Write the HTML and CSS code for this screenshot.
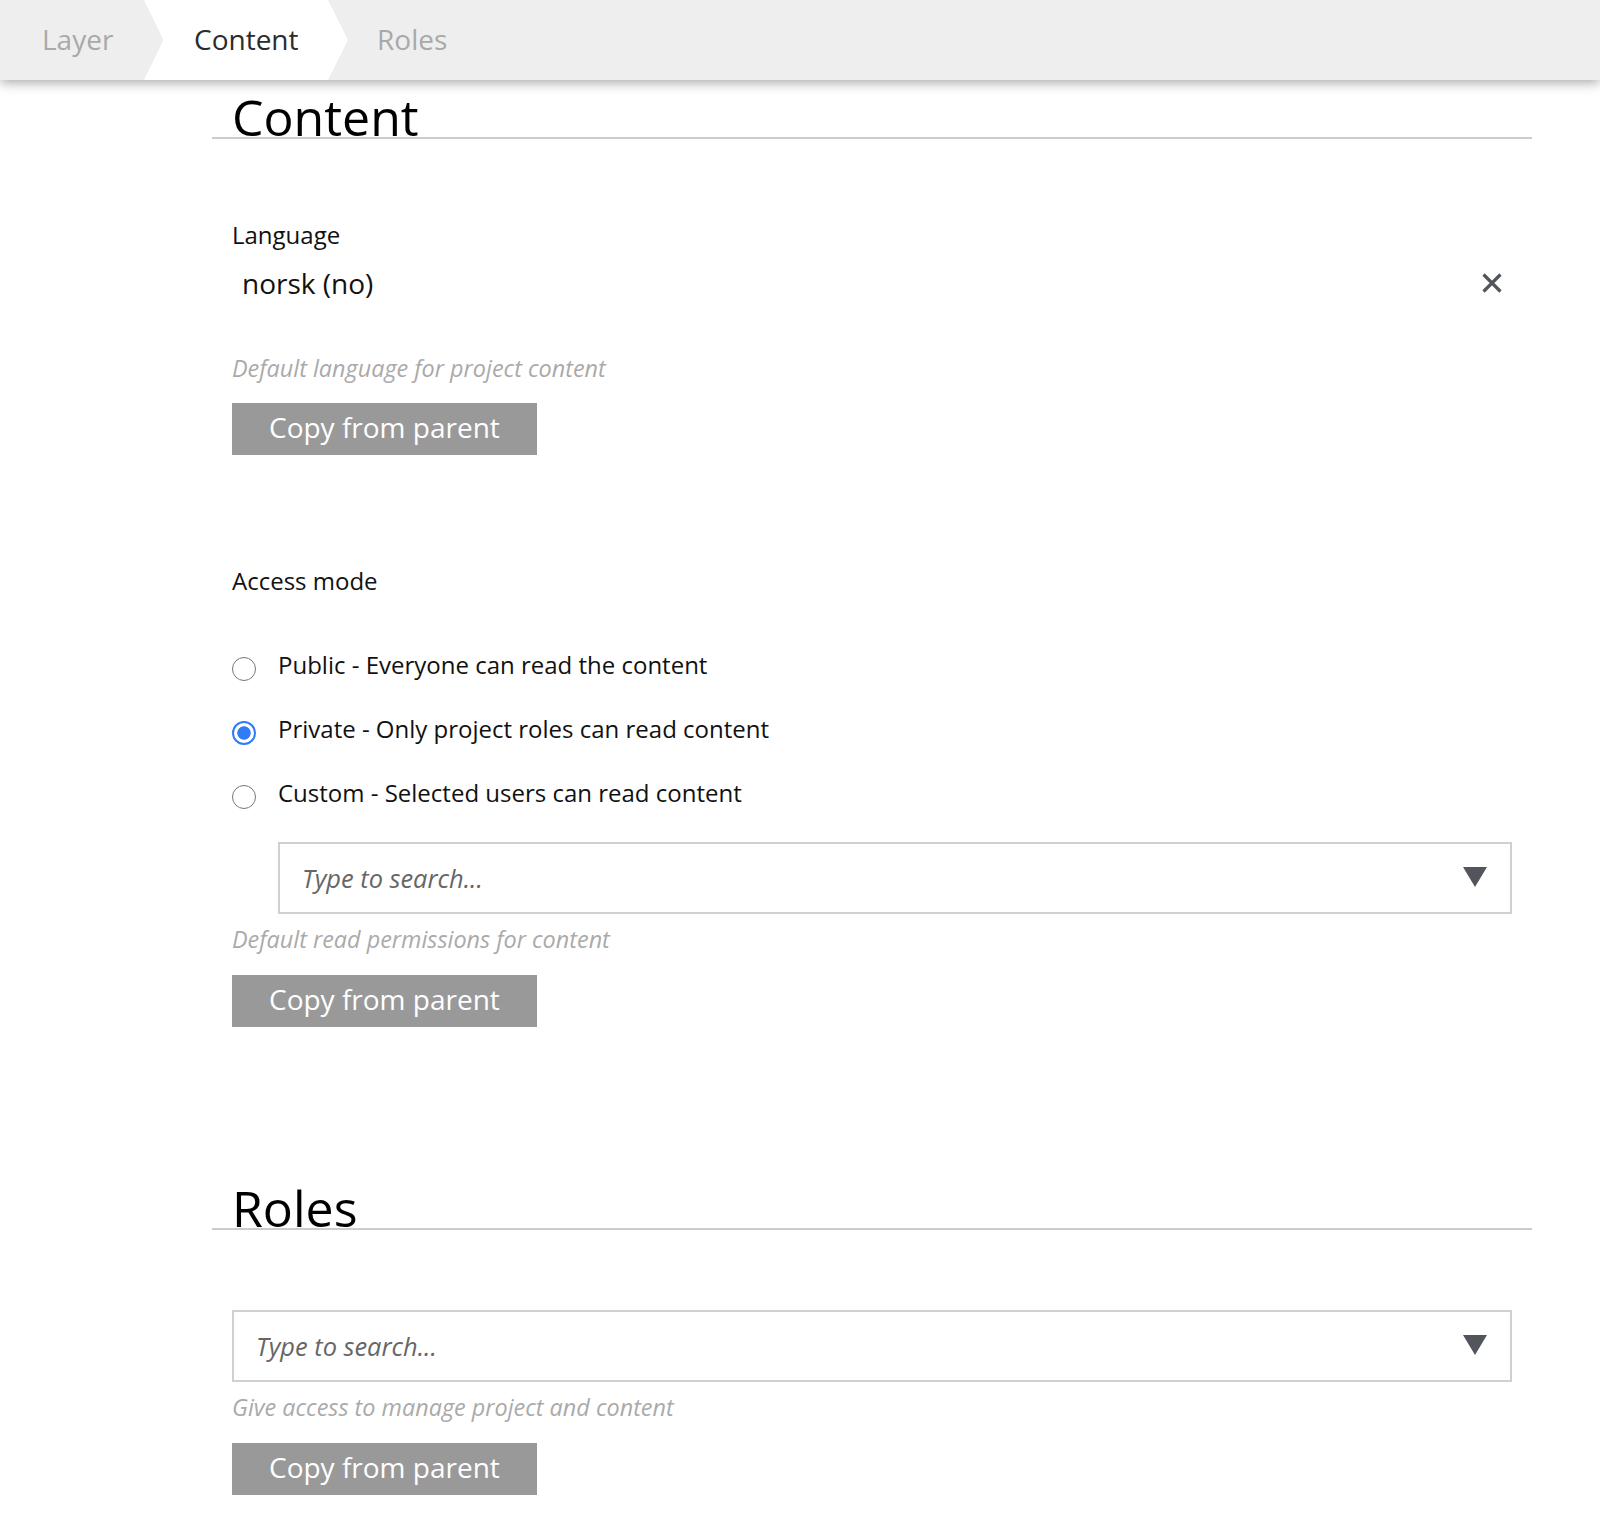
FILE: index.html
```html
<!DOCTYPE html>
<html lang="en">
<head>
<meta charset="utf-8">
<title>Content</title>
<link rel="stylesheet" href="styles.css">
</head>
<body>
<header class="tabbar">
  <div class="tab tab-first">Layer</div>
  <div class="tab tab-active">Content</div>
  <div class="tab tab-last">Roles</div>
</header>
<main class="page">
  <section class="section">
    <h2 class="section-title">Content</h2>
    <div class="section-body">
      <div class="field field-language">
        <div class="field-label">Language</div>
        <div class="select-value">
          <span class="select-text">norsk (no)</span>
          <svg class="clear-icon" width="22" height="22" viewBox="0 0 22 22" aria-hidden="true"><path d="M2.5 2.5 L19.5 19.5 M19.5 2.5 L2.5 19.5" stroke="#52565c" stroke-width="3.2" stroke-linecap="butt"/></svg>
        </div>
        <div class="help help-language">Default language for project content</div>
        <button class="copy-btn copy-btn-language">Copy from parent</button>
      </div>

      <div class="field field-access">
        <div class="field-label">Access mode</div>
        <div class="radios">
          <label class="radio-row"><span class="radio"></span><span class="radio-text">Public - Everyone can read the content</span></label>
          <label class="radio-row"><span class="radio radio-checked"></span><span class="radio-text">Private - Only project roles can read content</span></label>
          <label class="radio-row"><span class="radio"></span><span class="radio-text">Custom - Selected users can read content</span></label>
        </div>
        <div class="search search-indented">
          <span class="placeholder">Type to search...</span>
          <svg class="caret" width="24" height="20" viewBox="0 0 24 20" aria-hidden="true"><polygon points="0,0 24,0 12,20" fill="#52565c"/></svg>
        </div>
        <div class="help">Default read permissions for content</div>
        <button class="copy-btn">Copy from parent</button>
      </div>
    </div>
  </section>

  <section class="section section-roles">
    <h2 class="section-title">Roles</h2>
    <div class="section-body">
      <div class="field field-roles">
        <div class="search">
          <span class="placeholder">Type to search...</span>
          <svg class="caret" width="24" height="20" viewBox="0 0 24 20" aria-hidden="true"><polygon points="0,0 24,0 12,20" fill="#52565c"/></svg>
        </div>
        <div class="help">Give access to manage project and content</div>
        <button class="copy-btn">Copy from parent</button>
      </div>
    </div>
  </section>
</main>
</body>
</html>
```

FILE: styles.css
```css
* {
  box-sizing: border-box;
}

html, body {
  margin: 0;
  padding: 0;
  background: #ffffff;
}

body {
  font-family: "Open Sans", "Liberation Sans", sans-serif;
  color: #111;
}

/* ---------- tab bar ---------- */
.tabbar {
  position: relative;
  z-index: 2;
  display: flex;
  height: 80px;
  background: #eeeeee;
  box-shadow: 0 2px 12px rgba(0, 0, 0, 0.38);
}

.tab {
  font-size: 28px;
  line-height: 78px;
  height: 80px;
  color: #a9a9a9;
  white-space: nowrap;
}

.tab-first {
  flex: 0 0 144px;
  padding-left: 42px;
}

.tab-active {
  flex: 0 0 204px;
  padding-left: 50px;
  background: #ffffff;
  color: #2b2b2b;
  clip-path: polygon(0 0, 184px 0, 204px 40px, 184px 80px, 0 80px, 19.5px 40px);
}

.tab-last {
  padding-left: 29px;
}

/* ---------- page ---------- */
.page {
  width: 1532px;
  padding-left: 212px;
  padding-bottom: 39px;
}

.section-title {
  margin: 18px 0 0;
  padding-left: 20px;
  font-size: 50px;
  font-weight: 400;
  line-height: 39px;
  height: 41px;
  color: #000;
  border-bottom: 2px solid #cccccc;
}

.section-roles .section-title {
  margin-top: 162px;
}

.section-body {
  padding: 0 20px;
}

.field {
  display: flex;
  flex-direction: column;
  align-items: flex-start;
}

.field-label {
  font-size: 24px;
  line-height: 32px;
  color: #111;
}

.field-language {
  padding-top: 80px;
}

/* ---------- select with value ---------- */
.select-value {
  align-self: stretch;
  display: flex;
  align-items: center;
  justify-content: space-between;
  height: 48px;
  margin-top: 8px;
  padding-left: 10px;
  padding-right: 9px;
}

.select-text {
  font-size: 28px;
  line-height: 48px;
  color: #111;
}

.clear-icon {
  display: block;
  margin-top: -1px;
}

/* ---------- help text ---------- */
.help {
  font-size: 23.4px;
  line-height: 30px;
  font-style: italic;
  color: #aaaaaa;
  margin-top: 9.5px;
}

.help-language {
  margin-top: 45.5px;
}

/* ---------- button ---------- */
.copy-btn {
  margin-top: 21.5px;
  height: 52px;
  padding: 0 37px 4px;
  border: none;
  border-radius: 0;
  background: #999999;
  color: #ffffff;
  font-family: "Open Sans", "Liberation Sans", sans-serif;
  font-size: 28px;
  line-height: 48px;
  cursor: pointer;
}

.copy-btn-language {
  margin-top: 20.5px;
}

/* ---------- access mode ---------- */
.field-access {
  padding-top: 110px;
}

.radios {
  display: flex;
  flex-direction: column;
  gap: 32px;
  margin-top: 52px;
}

.radio-row {
  display: flex;
  align-items: flex-start;
  gap: 22px;
}

.radio {
  flex: 0 0 24px;
  width: 24px;
  height: 24px;
  margin-top: 8px;
  border: 1.7px solid #777777;
  border-radius: 50%;
  background: #fff;
}

.radio-checked {
  border: 2px solid #2f7cf6;
  background: radial-gradient(circle, #2f7cf6 0, #2f7cf6 6.3px, #ffffff 7.1px);
}

.radio-text {
  font-size: 24px;
  line-height: 32px;
  color: #111;
}

/* ---------- search ---------- */
.search {
  align-self: stretch;
  display: flex;
  align-items: center;
  justify-content: space-between;
  height: 72px;
  border: 2px solid #d0d0d0;
  padding: 0 23px 0 22px;
  background: #fff;
}

.search-indented {
  margin-left: 46px;
  margin-top: 33px;
}

.field-roles {
  padding-top: 80px;
}

.placeholder {
  font-size: 25.4px;
  font-style: italic;
  color: #666666;
}

.caret {
  display: block;
  margin-top: -2px;
}
```
